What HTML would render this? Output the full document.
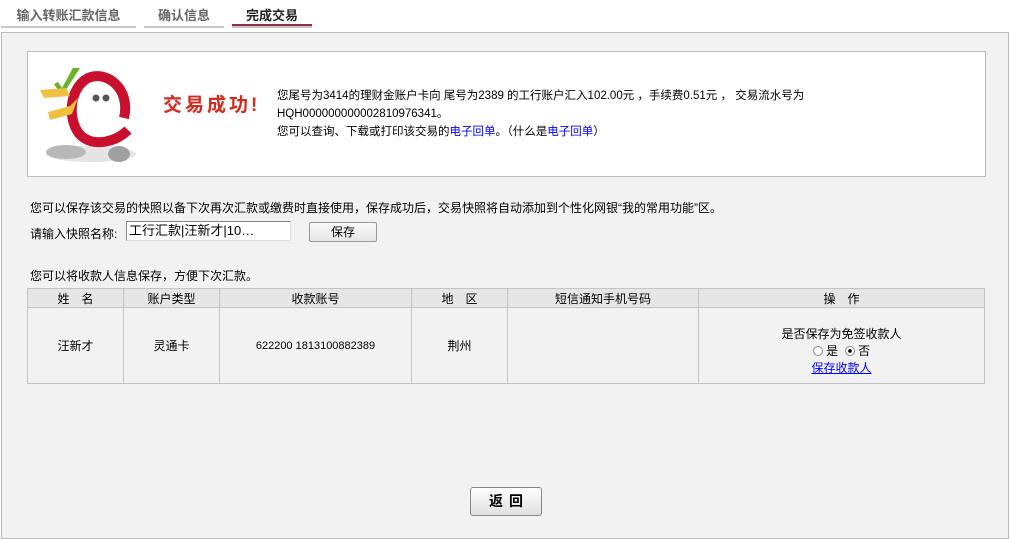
<!DOCTYPE html>
<html><head><meta charset="utf-8"><style>
*{margin:0;padding:0;box-sizing:border-box}
body{width:1010px;height:539px;background:#fff;font-family:"Liberation Sans","Noto Sans CJK SC",sans-serif;font-size:12px;color:#000;position:relative;overflow:hidden}
.a{position:absolute;white-space:nowrap}
.tab{position:absolute;top:6px;height:20px;font-weight:bold;font-size:13px;color:#666;text-align:center;line-height:20px}
.tab::after{content:"";position:absolute;left:0;right:0;bottom:-2px;height:2px;background:#c8c8c8}
.panel{position:absolute;left:1px;top:32px;width:1008px;height:507px;background:#f2f2f2;border:1px solid #bbb}
.box{position:absolute;left:27px;top:51px;width:959px;height:126px;background:#fff;border:1px solid #bbb}
table{position:absolute;left:27px;top:288px;width:958px;border-collapse:collapse;font-size:12px}
td,th{border:1px solid #c3c3c3;text-align:center;font-weight:normal}
th{background:#e6e6e6;height:19px}
td{height:76px}
a{color:#00f}
</style></head><body>
<div class="tab" style="left:1px;width:135px">输入转账汇款信息</div>
<div class="tab" style="left:144px;width:80px">确认信息</div>
<div class="tab" style="left:232px;width:80px;color:#222">完成交易</div>
<div style="position:absolute;left:232px;top:24px;width:80px;height:2px;background:#8e3040"></div>
<div class="panel"></div>
<div class="box">
<svg class="a" style="left:8px;top:16px" width="110" height="100" viewBox="0 0 110 100">
<ellipse cx="55" cy="86" rx="45" ry="8" fill="#e4e4e4"/>
<ellipse cx="30" cy="84" rx="20" ry="7" fill="#b8b8b8"/>
<ellipse cx="83" cy="86" rx="11" ry="8" fill="#a0a0a0"/>
<path d="M88 50 C95 20 70 2 52 10 C30 22 32 60 48 70 C60 78 80 74 92 62" fill="none" stroke="#c8102e" stroke-width="10"/>
<path d="M50 44 C55 25 75 20 82 40 Z" fill="#fff"/>
<circle cx="60" cy="30" r="3.5" fill="#555"/><circle cx="70" cy="30" r="3.5" fill="#555"/>
<path d="M18 16 L26 28 L44 0 L38 -2 L26 20 L22 14Z" fill="#6ab32a"/>
<path d="M4 22 L30 20 L34 28 L8 30Z M12 44 L34 38 L42 30 L36 46 L14 52Z" fill="#f0c040"/>
</svg>
<div class="a" style="left:135px;top:38px;font-size:19px;font-weight:bold;color:#d42a1f;letter-spacing:3px">交易成功!</div>
<div class="a" style="left:249px;top:35px;line-height:18px;font-size:11.5px">您尾号为3414的理财金账户卡向 尾号为2389 的工行账户汇入102.00元 ，手续费0.51元 ， 交易流水号为<br>HQH000000000002810976341。<br>您可以查询、下载或打印该交易的<a>电子回单</a>。（什么是<a>电子回单</a>）</div>
</div>
<div class="a" style="left:30px;top:199px">您可以保存该交易的快照以备下次再次汇款或缴费时直接使用，保存成功后，交易快照将自动添加到个性化网银“我的常用功能”区。</div>
<div class="a" style="left:30px;top:225px">请输入快照名称:</div>
<div class="a" style="left:126px;top:221px;width:165px;height:20px;background:#fff;border:1px solid #888;border-right-color:#ddd;border-bottom-color:#ddd;font-size:13px;line-height:18px;padding-left:2px">工行汇款|汪新才|10…</div>
<div class="a" style="left:309px;top:222px;width:68px;height:20px;border:1px solid #999;background:linear-gradient(#fafafa,#e6e6e6);text-align:center;line-height:18px;border-radius:2px">保存</div>
<div class="a" style="left:30px;top:267px">您可以将收款人信息保存，方便下次汇款。</div>
<table>
<tr><th style="width:96px">姓　名</th><th style="width:96px">账户类型</th><th style="width:192px">收款账号</th><th style="width:96px">地　区</th><th style="width:191px">短信通知手机号码</th><th>操　作</th></tr>
<tr><td>汪新才</td><td>灵通卡</td><td style="font-size:11px">622200 1813100882389</td><td>荆州</td><td></td>
<td style="padding-top:12px;line-height:17px">是否保存为免签收款人<br>
<span style="display:inline-block;width:10px;height:10px;border:1px solid #888;border-radius:50%;background:#fff;vertical-align:-1px"></span> 是 &nbsp;<span style="display:inline-block;width:10px;height:10px;border:1px solid #888;border-radius:50%;background:radial-gradient(#000 30%,#fff 35%);vertical-align:-1px"></span> 否<br><a style="text-decoration:underline">保存收款人</a></td></tr>
</table>
<div class="a" style="left:470px;top:487px;width:72px;height:29px;border:1px solid #888;border-radius:3px;background:linear-gradient(#fff,#e0e0e0);text-align:center;line-height:27px;font-weight:bold;font-size:14px;letter-spacing:6px;padding-left:6px">返回</div>
</body></html>
